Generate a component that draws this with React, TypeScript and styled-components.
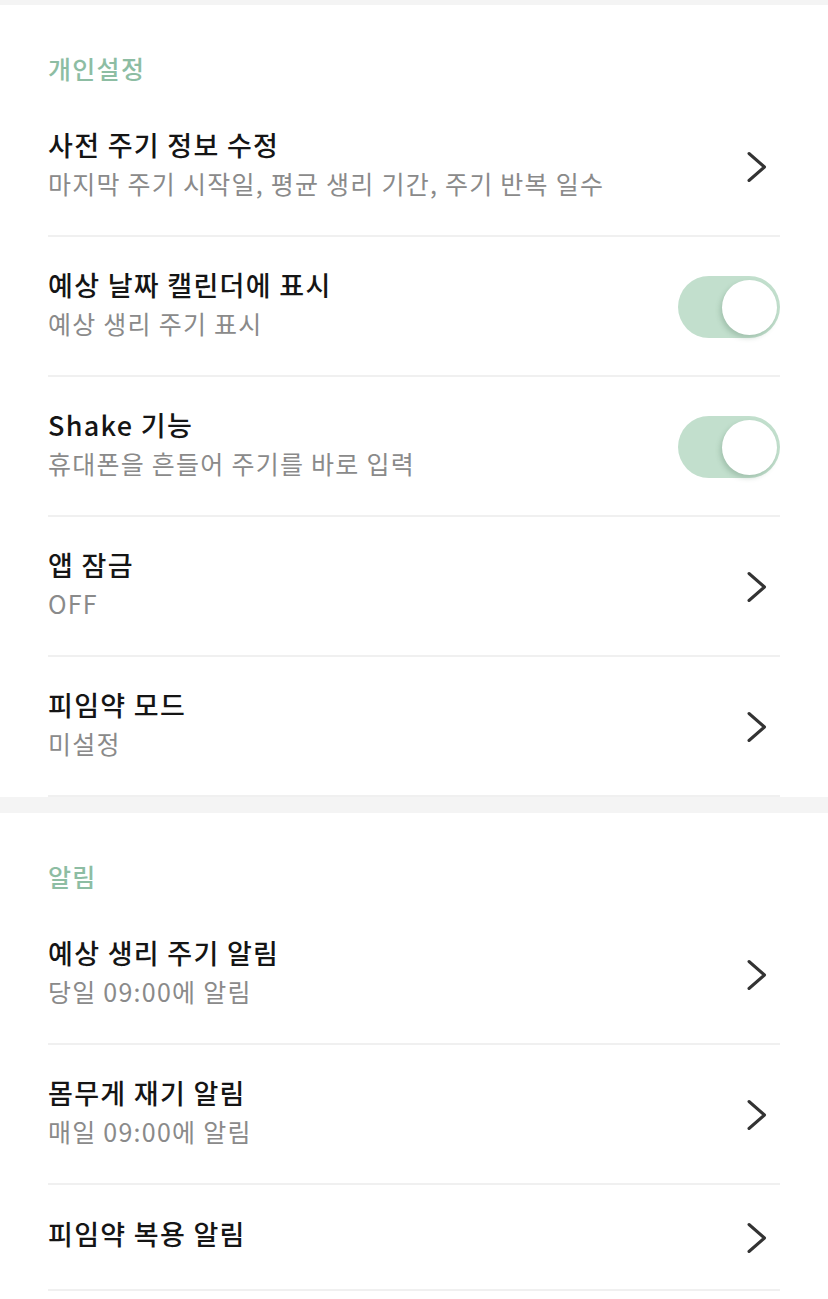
import React, { useState } from "react";
import styled, { createGlobalStyle } from "styled-components";

const GlobalStyle = createGlobalStyle`
  html, body { margin: 0; padding: 0; background: #ffffff; }
  body { font-family: "Noto Sans CJK KR", "Noto Sans", sans-serif; -webkit-font-smoothing: antialiased; }
  * { box-sizing: border-box; }
`;

const Page = styled.div`
  width: 828px;
  background: #ffffff;
`;

const Band = styled.div<{ $h: number }>`
  height: ${(p) => p.$h}px;
  background: #f4f4f4;
`;

const Section = styled.section`
  padding: 0 48px;
  background: #ffffff;
`;

const SectionTitle = styled.h2`
  margin: 0;
  padding: 48px 0 14px;
  font-size: 25px;
  line-height: 30px;
  letter-spacing: 1.3px;
  font-weight: 500;
  color: #8dbda3;
`;

const Row = styled.div`
  display: flex;
  align-items: center;
  padding: 28px 0 34px;
  border-bottom: 2px solid #f0f0f0;
`;

const Texts = styled.div`
  flex: 1;
  display: flex;
  flex-direction: column;
`;

const Title = styled.div`
  font-size: 27px;
  line-height: 40px;
  letter-spacing: 1.3px;
  font-weight: 500;
  color: #151515;
`;

const Sub = styled.div`
  font-size: 25px;
  line-height: 36px;
  letter-spacing: 1.25px;
  font-weight: 400;
  color: #8a8a8a;
`;

const Chevron = styled.svg`
  width: 22px;
  height: 34px;
  margin: 8px 12px 0 0;
  flex: none;
`;

const Track = styled.button<{ $on: boolean }>`
  position: relative;
  width: 102px;
  height: 62px;
  margin-top: 8px;
  border-radius: 31px;
  border: none;
  padding: 0;
  background: ${(p) => (p.$on ? "#c2dfcd" : "#e3e3e3")};
  cursor: pointer;
  flex: none;
`;

const Knob = styled.span<{ $on: boolean }>`
  position: absolute;
  top: 3.5px;
  left: ${(p) => (p.$on ? "44px" : "3px")};
  width: 55px;
  height: 55px;
  border-radius: 50%;
  background: #ffffff;
  box-shadow: -2px 3px 5px rgba(80, 120, 95, 0.28);
`;

const Arrow = () => (
  <Chevron viewBox="0 0 22 34">
    <path d="M3 3.5 L18.5 17 L3 30.5" fill="none" stroke="#333" strokeWidth="3" strokeLinecap="round" strokeLinejoin="round" />
  </Chevron>
);

const Toggle = ({ initial }: { initial: boolean }) => {
  const [on, setOn] = useState(initial);
  return (
    <Track $on={on} onClick={() => setOn(!on)} aria-pressed={on}>
      <Knob $on={on} />
    </Track>
  );
};

type Item = { title: string; sub?: string; toggle?: boolean };

const personal: Item[] = [
  { title: "사전 주기 정보 수정", sub: "마지막 주기 시작일, 평균 생리 기간, 주기 반복 일수" },
  { title: "예상 날짜 캘린더에 표시", sub: "예상 생리 주기 표시", toggle: true },
  { title: "Shake 기능", sub: "휴대폰을 흔들어 주기를 바로 입력", toggle: true },
  { title: "앱 잠금", sub: "OFF" },
  { title: "피임약 모드", sub: "미설정" },
];

const alarms: Item[] = [
  { title: "예상 생리 주기 알림", sub: "당일 09:00에 알림" },
  { title: "몸무게 재기 알림", sub: "매일 09:00에 알림" },
  { title: "피임약 복용 알림" },
];

const SettingRow = ({ item }: { item: Item }) => (
  <Row>
    <Texts>
      <Title>{item.title}</Title>
      {item.sub && <Sub>{item.sub}</Sub>}
    </Texts>
    {item.toggle ? <Toggle initial /> : <Arrow />}
  </Row>
);

export default function App() {
  return (
    <Page>
      <GlobalStyle />
      <Band $h={5} />
      <Section>
        <SectionTitle>개인설정</SectionTitle>
        {personal.map((it) => (
          <SettingRow key={it.title} item={it} />
        ))}
      </Section>
      <Band $h={16} />
      <Section>
        <SectionTitle>알림</SectionTitle>
        {alarms.map((it) => (
          <SettingRow key={it.title} item={it} />
        ))}
      </Section>
    </Page>
  );
}
